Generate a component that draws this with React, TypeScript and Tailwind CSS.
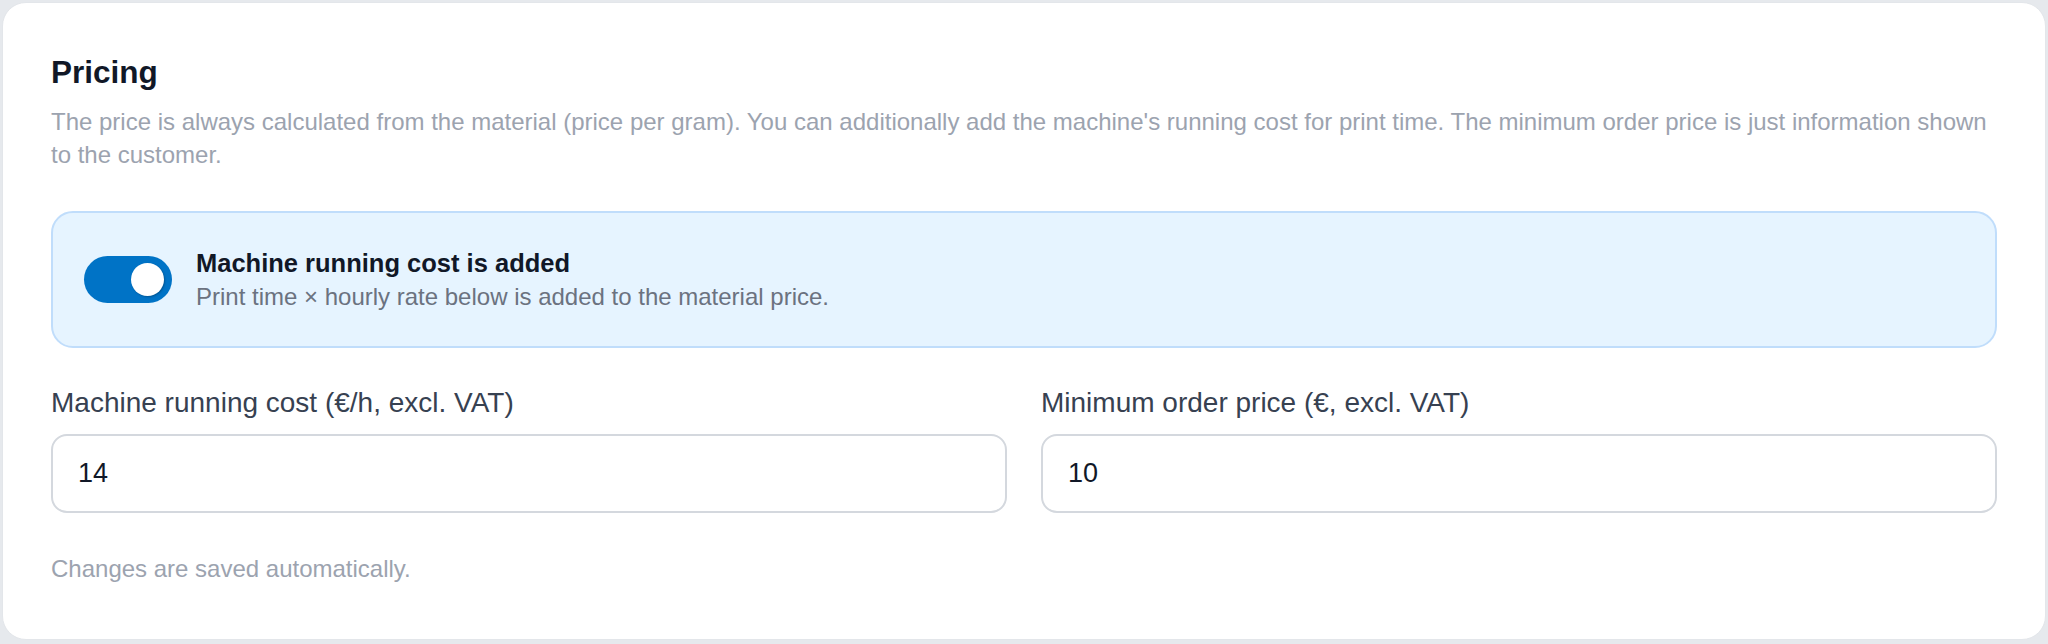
import { useState } from 'react';

function Toggle({ on, onChange }: { on: boolean; onChange: () => void }) {
  return (
    <button
      type="button"
      role="switch"
      aria-checked={on}
      onClick={onChange}
      className={`flex h-[47px] w-[88px] shrink-0 items-center rounded-full px-[8px] ${
        on ? 'justify-end bg-[#0073c6]' : 'justify-start bg-[#cbd5e1]'
      }`}
    >
      <span className="block h-[33px] w-[33px] rounded-full bg-white shadow-[1px_1px_2px_rgba(0,0,0,0.25)]" />
    </button>
  );
}

function Field({ label, value }: { label: string; value: string }) {
  return (
    <label className="flex flex-col">
      <span className="text-[28px] leading-[40px] text-[#374151]">{label}</span>
      <input
        type="text"
        defaultValue={value}
        className="mt-[11px] h-[79px] w-full rounded-[16px] border-2 border-[#d4d8de] bg-white px-[25px] text-[27px] text-[#111827] outline-none"
      />
    </label>
  );
}

export default function App() {
  const [maskin, setMaskin] = useState(true);

  return (
    <div className="bg-[#e6e9ed] px-[2px] pt-[2px] pb-[4px] font-['Liberation_Sans',Arial,sans-serif]">
      <section className="rounded-[24px] border border-[#e3e6ea] bg-white px-12 pt-12 pb-[52px]">
        <h2 className="text-[31.5px] font-bold leading-[42px] text-[#111827]">Pricing</h2>
        <p className="mt-3 text-[24px] leading-[33px] text-[#9ca3af]">
          The price is always calculated from the material (price per gram). You can additionally add the
          machine's running cost for print time. The minimum order price is just information shown to the
          customer.
        </p>

        <div className="mt-10 flex h-[137px] items-center gap-6 rounded-[22px] border-2 border-[#c0ddfb] bg-[#e6f4ff] pl-[31px]">
          <Toggle on={maskin} onChange={() => setMaskin((v) => !v)} />
          <div className="flex flex-col gap-[1px]">
            <span className="text-[25.5px] font-bold leading-[34px] text-[#111827]">
              Machine running cost is added
            </span>
            <span className="text-[24px] leading-[32px] text-[#6b7280]">
              Print time × hourly rate below is added to the material price.
            </span>
          </div>
        </div>

        <div className="mt-[35px] grid grid-cols-2 gap-[34px]">
          <Field label="Machine running cost (€/h, excl. VAT)" value="14" />
          <Field label="Minimum order price (€, excl. VAT)" value="10" />
        </div>

        <p className="mt-[38px] text-[24px] leading-[36px] text-[#9ca3af]">Changes are saved automatically.</p>
      </section>
    </div>
  );
}
